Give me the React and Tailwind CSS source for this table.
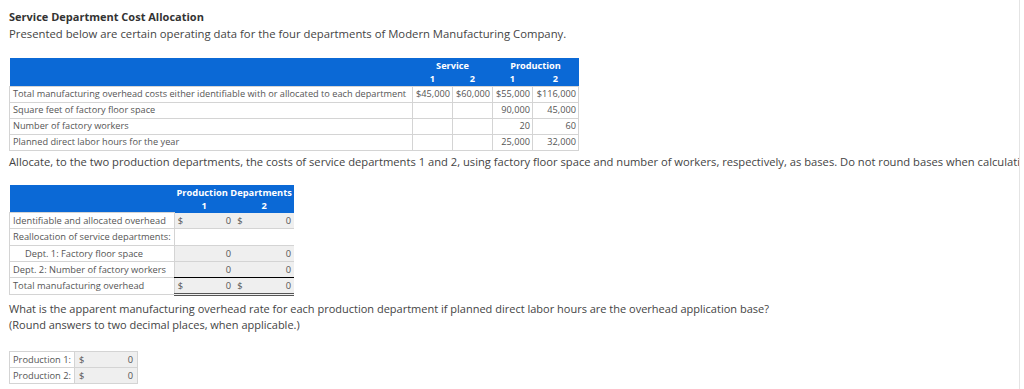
import React from 'react';

const rows1 = [
  { label: 'Total manufacturing overhead costs either identifiable with or allocated to each department', vals: ['$45,000', '$60,000', '$55,000', '$116,000'] },
  { label: 'Square feet of factory floor space', vals: ['', '', '90,000', '45,000'] },
  { label: 'Number of factory workers', vals: ['', '', '20', '60'] },
  { label: 'Planned direct labor hours for the year', vals: ['', '', '25,000', '32,000'] },
];

const DataTable = () => (
  <table className="border-collapse text-[9.2px] text-[#555] leading-none">
    <thead>
      <tr className="bg-[#0b69d6] text-white font-bold">
        <th className="h-[14px] pt-[1px] w-[403px]"></th>
        <th colSpan={2} className="pt-[1px] text-center">Service</th>
        <th colSpan={2} className="pt-[1px] text-center">Production</th>
      </tr>
      <tr className="bg-[#0b69d6] text-white font-bold">
        <th className="h-[14px]"></th>
        <th className="text-center">1</th>
        <th className="text-center">2</th>
        <th className="text-center">1</th>
        <th className="text-center">2</th>
      </tr>
    </thead>
    <tbody>
      {rows1.map((r, i) => (
        <tr key={i} className="h-[16px]">
          <td className="border border-[#d4d4d4] px-[3px] text-left whitespace-nowrap">{r.label}</td>
          {r.vals.map((v, j) => (
            <td key={j} className={`border border-[#d4d4d4] px-[2px] text-right whitespace-nowrap ${j === 3 ? 'w-[46px]' : 'w-[40px]'}`}>{v}</td>
          ))}
        </tr>
      ))}
    </tbody>
  </table>
);

const Cell = ({ sign, value, gray = true, top = false, bottom = false }) => (
  <td className={`border-b border-[#d4d4d4] px-[3px] w-[60px] ${gray ? 'bg-[#efefef]' : 'bg-white'} ${top ? 'border-t border-t-black' : ''} ${bottom ? 'border-b-[3px] border-b-[#555] border-double' : ''}`}>
    <div className="flex justify-between">
      <span>{sign}</span>
      <span>{value}</span>
    </div>
  </td>
);

const AllocTable = () => (
  <table className="border-collapse text-[9.3px] text-[#555] leading-none">
    <thead>
      <tr className="bg-[#0b69d6] text-white font-bold">
        <th className="w-[164px] h-[14px] pt-[3px]"></th>
        <th colSpan={2} className="pt-[3px] text-center">Production Departments</th>
      </tr>
      <tr className="bg-[#0b69d6] text-white font-bold">
        <th className="h-[14px]"></th>
        <th className="text-center">1</th>
        <th className="text-center">2</th>
      </tr>
    </thead>
    <tbody>
      <tr className="h-[16px]">
        <td className="border border-[#d4d4d4] px-[3px] whitespace-nowrap">Identifiable and allocated overhead</td>
        <Cell sign="$" value="0" />
        <Cell sign="$" value="0" />
      </tr>
      <tr className="h-[17px]">
        <td className="border border-[#d4d4d4] px-[3px] whitespace-nowrap">Reallocation of service departments:</td>
        <Cell gray={false} />
        <Cell gray={false} />
      </tr>
      <tr className="h-[16px]">
        <td className="border border-[#d4d4d4] pl-[15px] pr-[3px] whitespace-nowrap">Dept. 1: Factory floor space</td>
        <Cell value="0" />
        <Cell value="0" />
      </tr>
      <tr className="h-[16px]">
        <td className="border border-[#d4d4d4] px-[3px] whitespace-nowrap">Dept. 2: Number of factory workers</td>
        <Cell value="0" />
        <Cell value="0" />
      </tr>
      <tr className="h-[17px]">
        <td className="border border-[#d4d4d4] px-[3px] whitespace-nowrap">Total manufacturing overhead</td>
        <Cell sign="$" value="0" top bottom />
        <Cell sign="$" value="0" top bottom />
      </tr>
    </tbody>
  </table>
);

const RateTable = () => (
  <table className="border-collapse text-[9.3px] text-[#555] leading-none">
    <tbody>
      {['Production 1:', 'Production 2:'].map((l) => (
        <tr key={l} className="h-[16px]">
          <td className="border border-[#d4d4d4] px-[3px] w-[63px] whitespace-nowrap">{l}</td>
          <td className="border border-[#d4d4d4] bg-[#efefef] px-[4px] w-[63px]">
            <div className="flex justify-between">
              <span>$</span>
              <span>0</span>
            </div>
          </td>
        </tr>
      ))}
    </tbody>
  </table>
);

export default function App() {
  return (
    <div className="w-[1024px] h-[389px] bg-white overflow-hidden flex" style={{ fontFamily: '"Open Sans", sans-serif' }}>
      <div className="w-[1020px] border-r border-[#e4e4e4] overflow-hidden pl-[9px] pt-[10px] text-[#333]">
        <h1 className="text-[11px] font-bold leading-[14px]">Service Department Cost Allocation</h1>
        <p className="text-[11.3px] leading-[14px] mt-[3px] text-[#444]">Presented below are certain operating data for the four departments of Modern Manufacturing Company.</p>
        <div className="mt-[17px]">
          <DataTable />
        </div>
        <p className="text-[11.2px] leading-[14px] mt-[4px] whitespace-nowrap text-[#444]">Allocate, to the two production departments, the costs of service departments 1 and 2, using factory floor space and number of workers, respectively, as bases. Do not round bases when calculati</p>
        <div className="mt-[16px]">
          <AllocTable />
        </div>
        <p className="text-[11px] leading-[16px] mt-[5px] text-[#444]">What is the apparent manufacturing overhead rate for each production department if planned direct labor hours are the overhead application base?<br />(Round answers to two decimal places, when applicable.)</p>
        <div className="mt-[18px]">
          <RateTable />
        </div>
      </div>
    </div>
  );
}
